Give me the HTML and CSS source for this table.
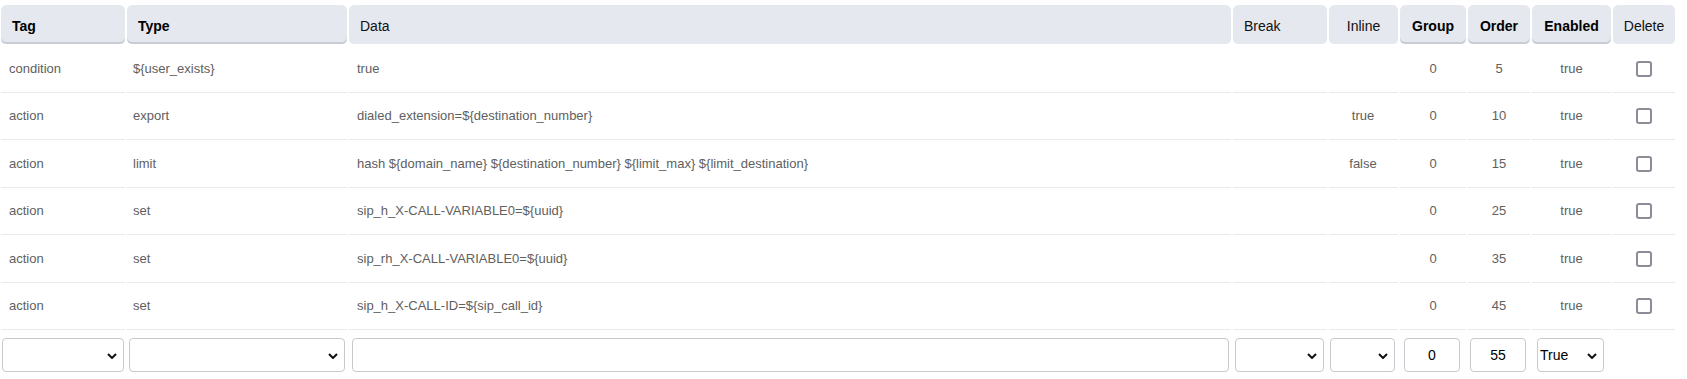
FILE: index.html
```html
<!DOCTYPE html>
<html>
<head>
<meta charset="utf-8">
<link rel="stylesheet" href="styles.css">
</head>
<body>
<table class="grid">
  <colgroup>
    <col class="c-tag"><col class="c-type"><col class="c-data"><col class="c-break"><col class="c-inline"><col class="c-group"><col class="c-order"><col class="c-enabled"><col class="c-delete">
  </colgroup>
  <thead>
    <tr class="head-row">
      <th class="sortable left">Tag</th>
      <th class="sortable left">Type</th>
      <th class="left">Data</th>
      <th class="left">Break</th>
      <th class="center">Inline</th>
      <th class="sortable center">Group</th>
      <th class="sortable center">Order</th>
      <th class="sortable center">Enabled</th>
      <th class="center">Delete</th>
    </tr>
  </thead>
  <tbody>
    <tr class="data-row">
      <td class="tag">condition</td><td class="type">${user_exists}</td><td class="data">true</td><td></td><td class="center"></td><td class="center">0</td><td class="center">5</td><td class="center">true</td><td class="center"><input type="checkbox" class="chk"></td>
    </tr>
    <tr class="data-row">
      <td class="tag">action</td><td class="type">export</td><td class="data">dialed_extension=${destination_number}</td><td></td><td class="center inl">true</td><td class="center">0</td><td class="center">10</td><td class="center">true</td><td class="center"><input type="checkbox" class="chk"></td>
    </tr>
    <tr class="data-row">
      <td class="tag">action</td><td class="type">limit</td><td class="data">hash ${domain_name} ${destination_number} ${limit_max} ${limit_destination}</td><td></td><td class="center inl">false</td><td class="center">0</td><td class="center">15</td><td class="center">true</td><td class="center"><input type="checkbox" class="chk"></td>
    </tr>
    <tr class="data-row">
      <td class="tag">action</td><td class="type">set</td><td class="data">sip_h_X-CALL-VARIABLE0=${uuid}</td><td></td><td class="center"></td><td class="center">0</td><td class="center">25</td><td class="center">true</td><td class="center"><input type="checkbox" class="chk"></td>
    </tr>
    <tr class="data-row">
      <td class="tag">action</td><td class="type">set</td><td class="data">sip_rh_X-CALL-VARIABLE0=${uuid}</td><td></td><td class="center"></td><td class="center">0</td><td class="center">35</td><td class="center">true</td><td class="center"><input type="checkbox" class="chk"></td>
    </tr>
    <tr class="data-row">
      <td class="tag">action</td><td class="type">set</td><td class="data">sip_h_X-CALL-ID=${sip_call_id}</td><td></td><td class="center"></td><td class="center">0</td><td class="center">45</td><td class="center">true</td><td class="center"><input type="checkbox" class="chk"></td>
    </tr>
    <tr class="input-row">
      <td class="in-tag"><div class="sel-wrap"><select class="sel"><option></option></select><svg class="chev" width="10" height="6" viewBox="0 0 10 6"><polyline points="1,1 5,5 9,1" fill="none" stroke="#111" stroke-width="2"/></svg></div></td>
      <td class="in-type"><div class="sel-wrap"><select class="sel"><option></option></select><svg class="chev" width="10" height="6" viewBox="0 0 10 6"><polyline points="1,1 5,5 9,1" fill="none" stroke="#111" stroke-width="2"/></svg></div></td>
      <td class="in-data"><input type="text" class="txt"></td>
      <td class="in-break"><div class="sel-wrap"><select class="sel"><option></option></select><svg class="chev" width="10" height="6" viewBox="0 0 10 6"><polyline points="1,1 5,5 9,1" fill="none" stroke="#111" stroke-width="2"/></svg></div></td>
      <td class="in-inline"><div class="sel-wrap"><select class="sel"><option></option></select><svg class="chev" width="10" height="6" viewBox="0 0 10 6"><polyline points="1,1 5,5 9,1" fill="none" stroke="#111" stroke-width="2"/></svg></div></td>
      <td class="in-group"><input type="text" class="txt num" value="0"></td>
      <td class="in-order"><input type="text" class="txt num" value="55"></td>
      <td class="in-enabled"><div class="sel-wrap small"><select class="sel en"><option>True</option></select><svg class="chev" width="10" height="6" viewBox="0 0 10 6"><polyline points="1,1 5,5 9,1" fill="none" stroke="#111" stroke-width="2"/></svg></div></td>
      <td></td>
    </tr>
  </tbody>
</table>
</body>
</html>
```
FILE: styles.css
```css
html, body {
  margin: 0;
  padding: 0;
  background: #fff;
}
body {
  font-family: "Liberation Sans", Arial, sans-serif;
  overflow: hidden;
}
.grid {
  table-layout: fixed;
  border-collapse: separate;
  border-spacing: 2px 0;
  width: 1678px;
  margin: 5px 0 0 -1px;
}
.c-tag { width: 124px; }
.c-type { width: 220px; }
.c-data { width: 882px; }
.c-break { width: 94px; }
.c-inline { width: 69px; }
.c-group { width: 66px; }
.c-order { width: 62px; }
.c-enabled { width: 79px; }
.c-delete { width: 62px; }

.head-row { height: 40px; }
.grid th {
  background: #e5e8ee;
  background-clip: padding-box;
  border-bottom: 1px solid transparent;
  border-radius: 5px;
  font-size: 14px;
  font-weight: normal;
  color: #111;
  padding: 3px 10px 0 10px;
  white-space: nowrap;
  vertical-align: middle;
}
.grid th.left { text-align: left; padding-left: 11px; }
.grid th.center { text-align: center; padding: 3px 0 0 0; }
.grid th.sortable {
  font-weight: bold;
  color: #000;
  box-shadow: inset 0 -2px 0 #c9ccd4;
}

.data-row { height: 47.5px; }
.data-row td {
  border-bottom: 1px solid #e8e9ec;
  font-size: 13px;
  color: #606060;
  padding: 0;
  vertical-align: middle;
  white-space: nowrap;
}
.data-row td.tag { padding-left: 8px; }
.data-row td.type { padding-left: 6px; }
.data-row td.data { padding-left: 8px; }
.data-row td.center { text-align: center; }
.data-row td.inl { padding-right: 1px; }

.chk {
  appearance: none;
  -webkit-appearance: none;
  width: 16px;
  height: 16px;
  margin: 0;
  border: 2px solid #8d8b97;
  border-radius: 3px;
  background: #fff;
  box-sizing: border-box;
  vertical-align: middle;
}

.input-row { height: 49px; }
.input-row td {
  padding: 8px 0 7px 0;
  vertical-align: top;
}
.in-tag { padding-left: 1px !important; padding-right: 1px !important; }
.in-type { padding-left: 2px !important; padding-right: 2px !important; }
.in-data { padding-left: 3px !important; padding-right: 2px !important; }
.in-break { padding-left: 2px !important; padding-right: 3px !important; }
.in-inline { padding-left: 1px !important; padding-right: 3px !important; }
.in-group { padding-left: 4px !important; }
.in-order { padding-left: 2px !important; }
.in-enabled { padding-left: 5px !important; }

.sel-wrap {
  position: relative;
  height: 34px;
}
.sel-wrap.small { width: 67px; }
.sel {
  appearance: none;
  -webkit-appearance: none;
  width: 100%;
  height: 34px;
  box-sizing: border-box;
  border: 1px solid #c7c9cd;
  border-radius: 4px;
  background: #fff;
  font-family: "Liberation Sans", Arial, sans-serif;
  font-size: 14px;
  color: #000;
  padding: 0 2px;
  margin: 0;
  display: block;
}
.chev {
  position: absolute;
  right: 7px;
  top: 15px;
  pointer-events: none;
}
.txt {
  display: block;
  width: 100%;
  height: 34px;
  box-sizing: border-box;
  border: 1px solid #c7c9cd;
  border-radius: 4px;
  background: #fff;
  font-family: "Liberation Sans", Arial, sans-serif;
  font-size: 14px;
  color: #000;
  padding: 0 4px;
  margin: 0;
}
.txt.num {
  width: 56px;
  text-align: center;
}
```
